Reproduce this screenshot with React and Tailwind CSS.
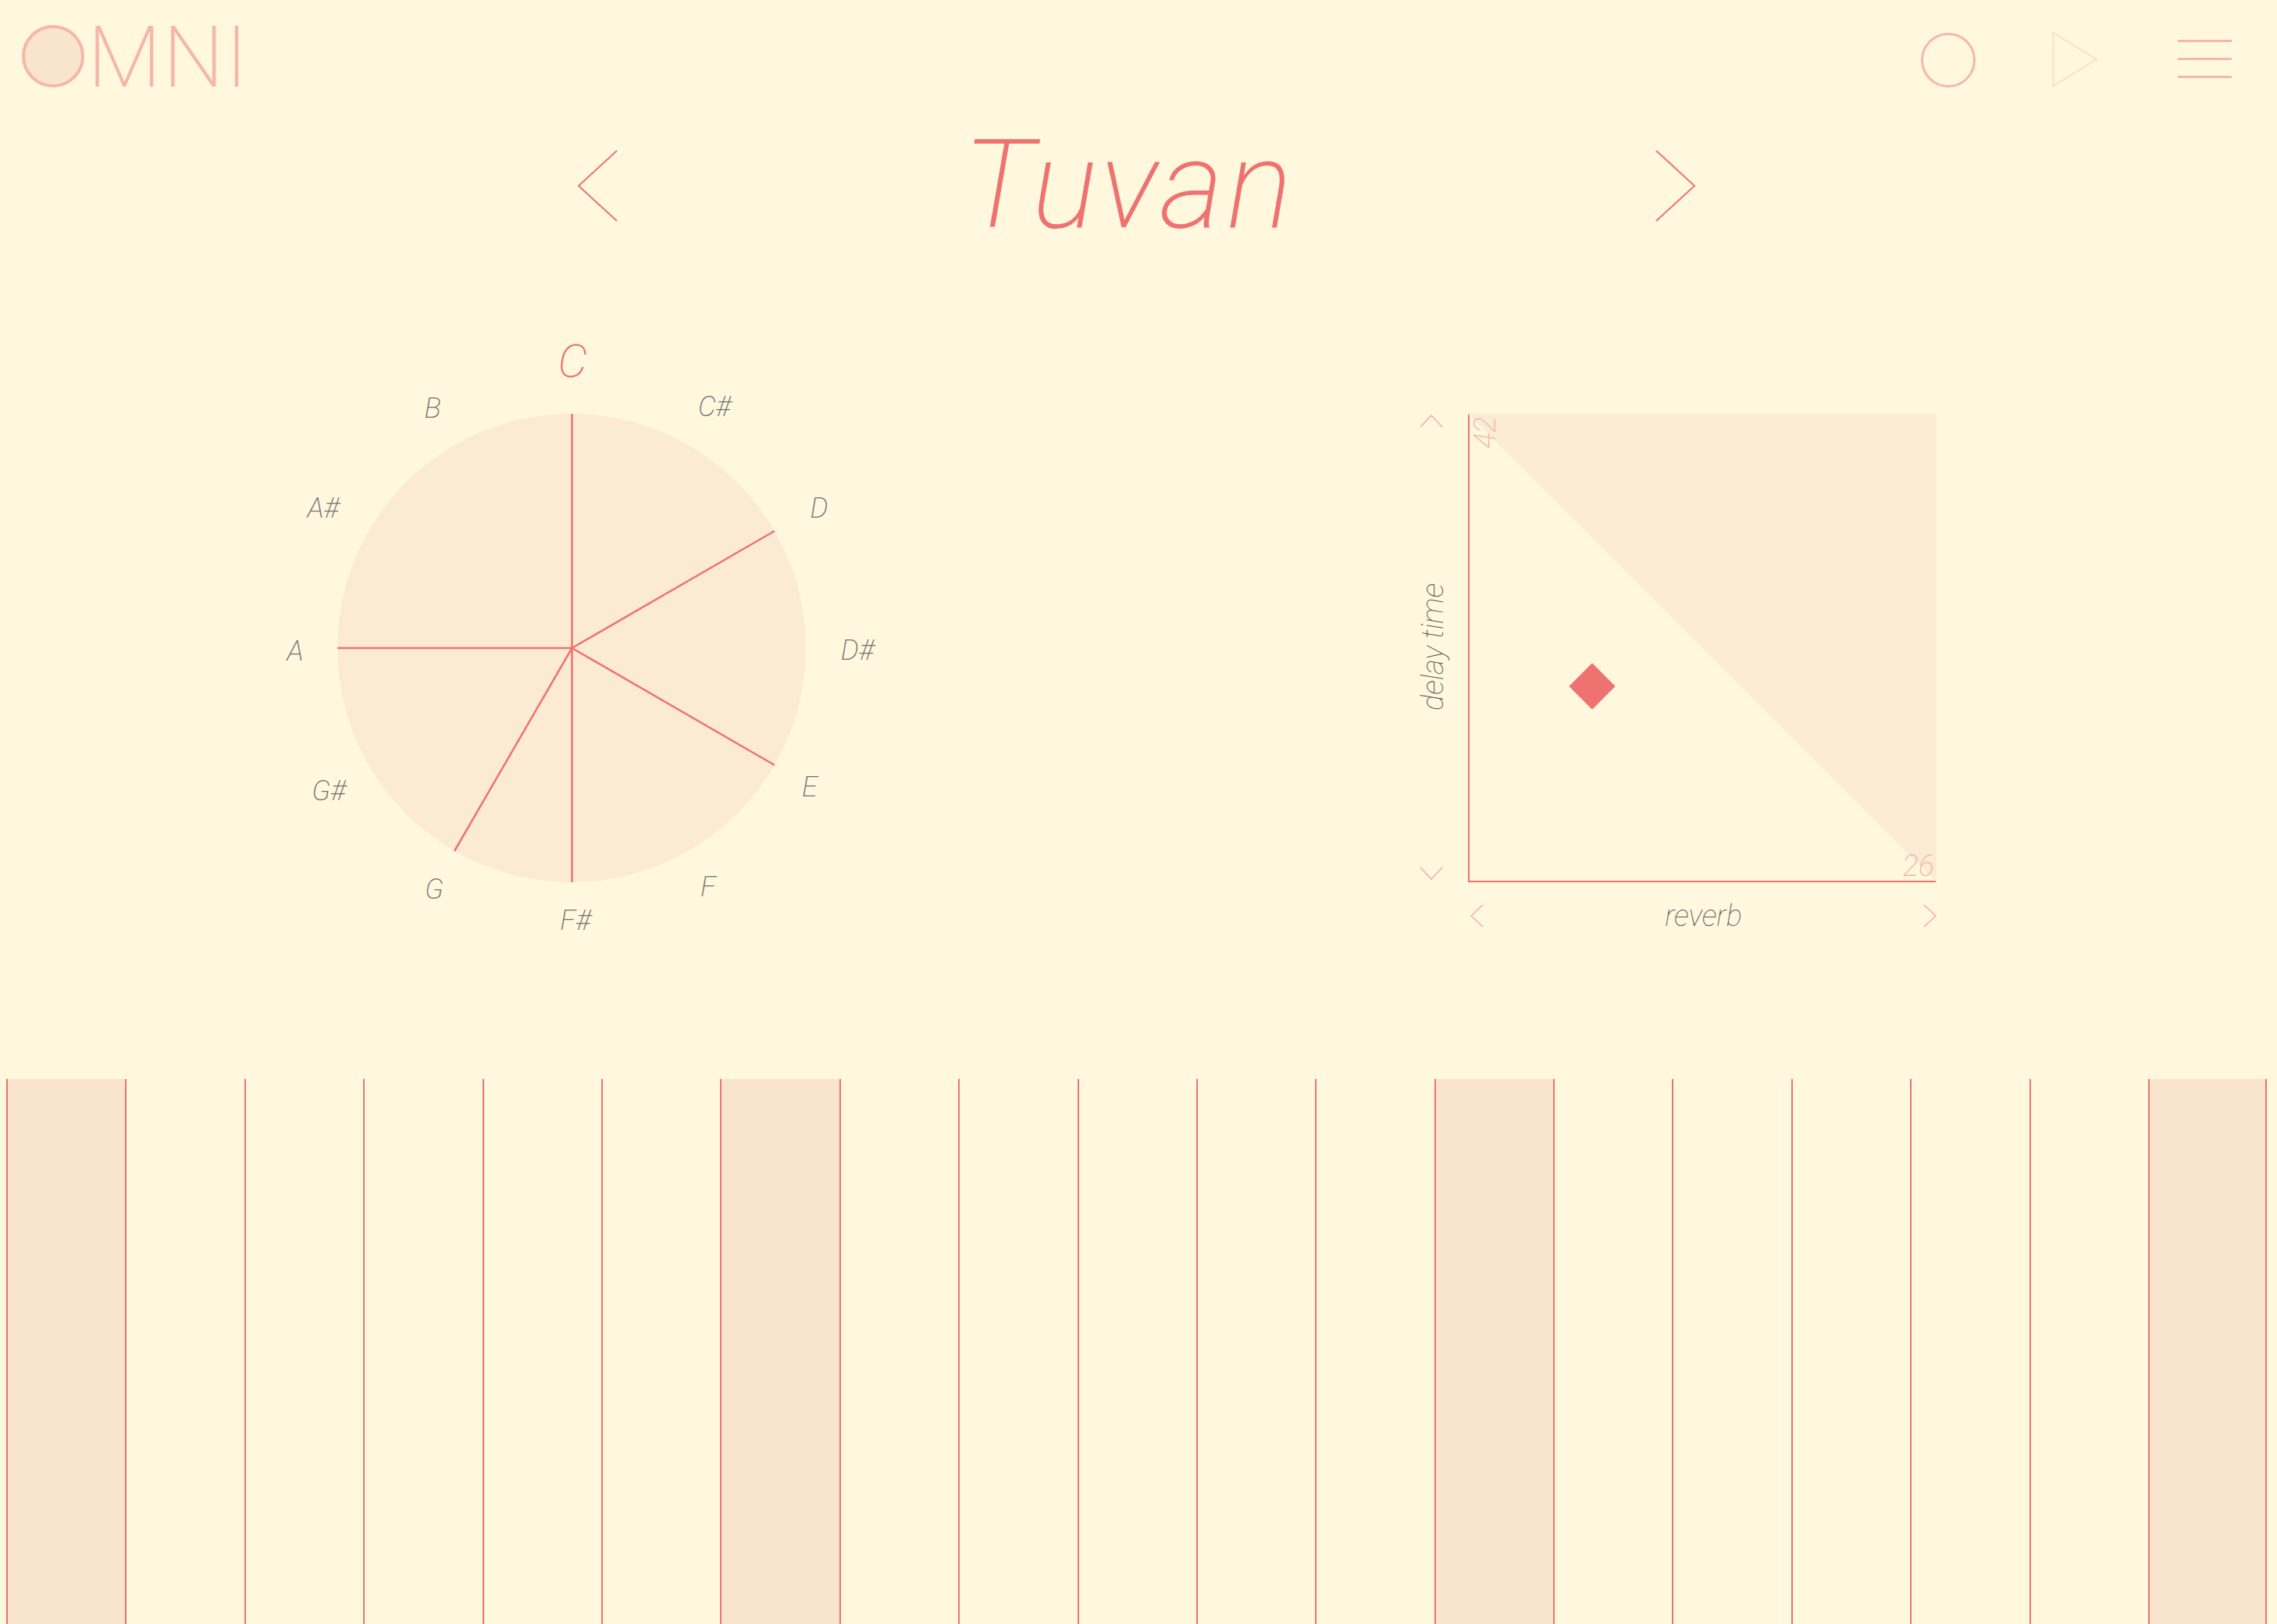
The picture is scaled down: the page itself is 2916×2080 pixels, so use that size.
const notes = [
  { name: 'C', pos: 'left-[401px] top-[33px]', cls: 'text-[60px] text-[#ee7370]' },
  { name: 'C#', pos: 'left-[583px] top-[91px]' },
  { name: 'D', pos: 'left-[717px] top-[221px]' },
  { name: 'D#', pos: 'left-[766px] top-[403px]' },
  { name: 'E', pos: 'left-[705px] top-[578px]' },
  { name: 'F', pos: 'left-[575px] top-[706px]' },
  { name: 'F#', pos: 'left-[405px] top-[749px]' },
  { name: 'G', pos: 'left-[224px] top-[709px]' },
  { name: 'G#', pos: 'left-[89px] top-[583px]' },
  { name: 'A', pos: 'left-[46px] top-[404px]' },
  { name: 'A#', pos: 'left-[82px] top-[221px]' },
  { name: 'B', pos: 'left-[222px] top-[93px]' },
];

// spoke ends on the 300px circle, centre at 400,400
const spokes = [
  [400.5, 100],
  [660, 250],
  [660, 550],
  [400.5, 700],
  [250, 660],
  [100, 400],
];

const keys = Array.from({ length: 19 }, (_, i) => i);

const Chevron = ({ points, w, h, className = '' }) => (
  <svg width={w} height={h} viewBox={`0 0 ${w} ${h}`} fill="none" className={className}>
    <polyline points={points} stroke="#f3ab9e" strokeWidth="1.5" />
  </svg>
);

const Wheel = () => (
  <div className="relative w-[800px] h-[800px] shrink-0">
    <div className="absolute left-[100px] top-[100px] w-[600px] h-[600px] rounded-full bg-[#fbebd5]" />
    <svg width="800" height="800" viewBox="0 0 800 800" className="absolute inset-0">
      {spokes.map(([x, y]) => (
        <line key={`${x}-${y}`} x1="400.5" y1="400" x2={x} y2={y} stroke="#ee7370" strokeWidth="2.5" />
      ))}
    </svg>
    {notes.map((n) => (
      <span
        key={n.name}
        className={`absolute -translate-x-1/2 -translate-y-1/2 italic font-extralight leading-none ${n.pos} ${n.cls || 'text-[36px] text-[#707070]'}`}
      >
        {n.name}
      </span>
    ))}
  </div>
);

const Pad = () => (
  <div className="grid grid-cols-[70px_600px] grid-rows-[600px_70px] ml-[678px] mt-[100px]">
    <div className="flex flex-col justify-between items-center pr-[24px] pt-[1px] pb-[3px]">
      <Chevron w={30} h={17} points="1,16 15,1 29,16" />
      <span className="[writing-mode:vertical-rl] rotate-180 italic font-thin text-[38px] leading-none text-[#585858] -mr-[4px]">
        delay time
      </span>
      <Chevron w={30} h={17} points="1,1 15,16 29,1" />
    </div>
    <div className="relative border-l-2 border-b-2 border-[#ee7370]">
      <svg width="600" height="600" viewBox="0 0 600 600" className="absolute -left-[2px] top-0">
        <polygon points="0,0 600,0 600,600" fill="#fbebd5" />
      </svg>
      <div className="absolute left-[136px] top-[328px] w-[42px] h-[42px] rotate-45 bg-[#ee7370]" />
      <span className="absolute left-[1px] top-[4px] [writing-mode:vertical-rl] rotate-180 italic font-extralight text-[38px] leading-none text-[#f4b7a8]">
        42
      </span>
      <span className="absolute right-[3px] bottom-[0px] italic font-extralight text-[38px] leading-none text-[#f4b7a8]">
        26
      </span>
    </div>
    <div />
    <div className="flex justify-between items-center pl-[3px] pt-[16px]">
      <Chevron w={17} h={30} points="16,1 1,15 16,29" />
      <span className="italic font-thin text-[38px] leading-none text-[#585858]">reverb</span>
      <Chevron w={17} h={30} points="1,1 16,15 1,29" />
    </div>
  </div>
);

export default function App() {
  return (
    <div className="flex flex-col h-screen overflow-hidden bg-[#fff8de] font-['Roboto',sans-serif]">
      <header className="flex justify-between h-[143px] shrink-0 pl-[28px] pr-[58px] pt-[32px]">
        <div className="flex items-start">
          <div className="w-[80px] h-[80px] rounded-full border-4 border-[#f4b7a8] bg-[#f9e5ce]" />
          <span className="font-extralight text-[110px] leading-[84px] tracking-[2px] text-[#f4b7a8] ml-[4px]">
            MNI
          </span>
        </div>
        <div className="flex items-start gap-[99px] pt-[10px]">
          <div className="w-[70px] h-[70px] rounded-full border-[3px] border-[#f4b7a8] -mr-[1px]" />
          <svg width="60" height="72" viewBox="0 0 60 72" fill="none" className="-mt-[2px] mr-[2px]">
            <polygon points="1.5,2 57,36 1.5,70" stroke="#fbe3cd" strokeWidth="2.5" />
          </svg>
          <div className="flex flex-col gap-[20px] w-[69px] pt-[9px]">
            <div className="h-[3px] bg-[#f4b7a8]" />
            <div className="h-[3px] bg-[#f4b7a8]" />
            <div className="h-[3px] bg-[#f4b7a8]" />
          </div>
        </div>
      </header>

      <div className="flex items-center h-[190px] shrink-0 pl-[739px]">
        <svg width="52" height="92" viewBox="0 0 52 92" fill="none">
          <polyline points="51,1 2,46 51,91" stroke="#ee7370" strokeWidth="2" />
        </svg>
        <h1 className="italic font-extralight text-[158px] tracking-[4px] leading-none text-[#ee7370] w-[400px] ml-[442px] -mt-[3px]">
          Tuvan
        </h1>
        <svg width="52" height="92" viewBox="0 0 52 92" fill="none" className="ml-[487px]">
          <polyline points="1,1 50,46 1,91" stroke="#ee7370" strokeWidth="2" />
        </svg>
      </div>

      <main className="flex items-start h-[1049px] shrink-0 pl-[332px] pt-[97px]">
        <Wheel />
        <Pad />
      </main>

      <div className="grid flex-1 grid-cols-[repeat(19,152.4px)] pl-[8px]">
        {keys.map((i) => (
          <div
            key={i}
            className={`border-l-2 border-[#ee7370] ${i % 6 === 0 ? 'bg-[#f9e5ce]' : ''} ${i === 18 ? 'border-r-2' : ''}`}
          />
        ))}
      </div>
    </div>
  );
}
